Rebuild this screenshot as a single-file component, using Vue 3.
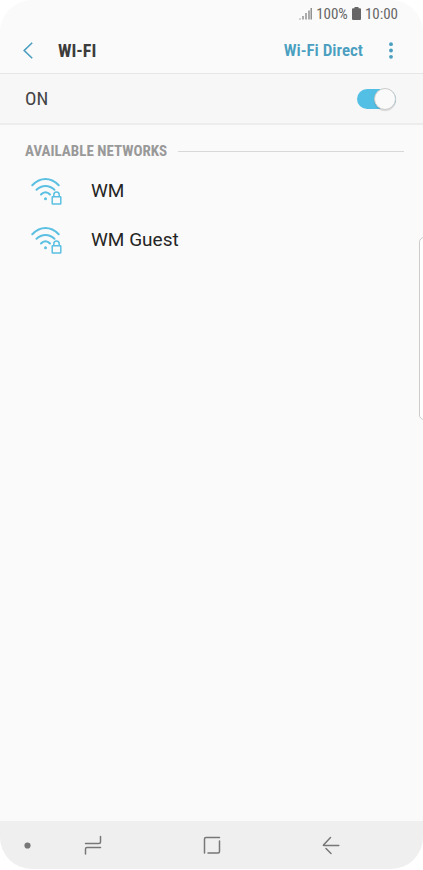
<script setup>
import { ref } from 'vue'

const enabled = ref(true)
const networks = ['WM', 'WM Guest']
</script>

<template>
  <div class="phone">
    <div class="status">
      <svg class="signal" viewBox="0 0 13 12" aria-hidden="true">
        <path d="M1 10.500v1M4 8v3.500M7 5v6.500M10 2.500v9M12.200 0v11.500" />
      </svg>
      <span>100%</span>
      <svg class="battery" viewBox="0 0 9 13" aria-hidden="true">
        <path d="M2.500 0h4v1.300H8q1 0 1 1V12q0 1-1 1H1q-1 0-1-1V2.300q0-1 1-1h1.500z" />
      </svg>
      <span>10:00</span>
    </div>

    <header class="bar">
      <button class="icon-button back" type="button" aria-label="Back">
        <svg viewBox="0 0 10 17" aria-hidden="true"><path d="M9.200 .7 1.200 8.500l8 7.800" /></svg>
      </button>
      <h1>WI-FI</h1>
      <a class="direct" href="#">Wi-Fi Direct</a>
      <button class="icon-button more" type="button" aria-label="More options">
        <svg viewBox="0 0 4 17" aria-hidden="true">
          <circle cx="2" cy="2.200" r="1.900" /><circle cx="2" cy="8.500" r="1.900" /><circle cx="2" cy="14.800" r="1.900" />
        </svg>
      </button>
    </header>

    <label class="power">
      <span>{{ enabled ? 'ON' : 'OFF' }}</span>
      <input v-model="enabled" type="checkbox" role="switch" />
    </label>

    <main>
      <h2>AVAILABLE NETWORKS</h2>
      <ul>
        <li v-for="name in networks" :key="name">
          <button class="network" type="button">
            <svg class="wifi" viewBox="0 0 32 28" aria-hidden="true">
              <g class="waves">
                <path d="M1.300 8.200Q7.500 2 14.500 2t13.200 6.200" />
                <path d="M5.500 12.800q4-3.800 9-3.800t9 3.800" />
                <path d="M10 17.500q2-2.200 4.500-2.200t4.500 2.200" />
              </g>
              <circle cx="14.500" cy="21.700" r="1.500" />
              <g class="lock">
                <rect x="21.200" y="19.700" width="8.600" height="7.300" rx=".6" />
                <path d="M22.800 19.500v-1.700q0-2.800 2.700-2.800t2.700 2.800v1.700" />
              </g>
            </svg>
            <span>{{ name }}</span>
          </button>
        </li>
      </ul>
    </main>

    <div class="edge"></div>

    <nav>
      <button class="hide" type="button" aria-label="Hide navigation bar">
        <svg class="dot" viewBox="0 0 7 7" aria-hidden="true"><circle cx="3.500" cy="3.500" r="3.100" /></svg>
      </button>
      <button type="button" aria-label="Recent apps">
        <svg viewBox="0 0 18 20" aria-hidden="true">
          <path d="M1.500 8.500H15q1.500 0 1.500-1.500V1.500M16.500 12.500H3q-1.500 0-1.500 1.500v5" />
        </svg>
      </button>
      <button type="button" aria-label="Home">
        <svg viewBox="0 0 18 20" aria-hidden="true">
          <path d="M1.500 18V4q0-1.500 1.500-1.500h13.500M16.500 6v10.500q0 1.500-1.500 1.500H5" />
        </svg>
      </button>
      <button type="button" aria-label="Back">
        <svg viewBox="0 0 18 20" aria-hidden="true">
          <path d="M8.500 2.500 1.500 10q-.4.500.3.500h15M4 13.500l5 5" />
        </svg>
      </button>
    </nav>
  </div>
</template>

<style>
body {
  background: #fff;
}
</style>

<style scoped>
.phone {
  position: relative;
  display: flex;
  flex-direction: column;
  box-sizing: border-box;
  min-height: calc(100vh - 1px);
  overflow: hidden;
  border-radius: 32px;
  background: #fafafa;
  color: #252525;
  font-family: "Roboto Condensed", Roboto, sans-serif;
}

button {
  padding: 0;
  border: 0;
  background: none;
  color: inherit;
  font: inherit;
}

svg {
  display: block;
  fill: none;
}

.status {
  display: flex;
  align-items: center;
  justify-content: flex-end;
  gap: 4px;
  height: 27px;
  padding-right: 25px;
  color: #666;
  font-size: 15px;
}

.signal {
  width: 13px;
  height: 12px;
  stroke: #777;
  stroke-width: 1.2;
}

.battery {
  width: 9px;
  height: 13px;
  fill: #666;
}

.bar {
  display: flex;
  align-items: center;
  height: 46px;
  padding: 0 22px;
  border-bottom: 1px solid #e6e6e6;
}

.icon-button {
  display: flex;
  align-items: center;
  justify-content: center;
  height: 40px;
}

.back {
  width: 12px;
}

.back svg {
  width: 10px;
  height: 17px;
  stroke: #4a9fc0;
  stroke-width: 1.6;
}

h1 {
  flex: 1;
  margin: 0 0 0 24px;
  color: #3c3c3c;
  font-size: 18px;
  font-weight: 700;
}

.direct {
  color: #4a9fc0;
  font-size: 17px;
  font-weight: 600;
  text-decoration: none;
}

.more {
  width: 20px;
  margin-left: 18px;
}

.more svg {
  width: 4px;
  height: 17px;
  fill: #4a9fc0;
}

.power {
  display: flex;
  align-items: center;
  justify-content: space-between;
  height: 49px;
  padding: 0 27px 0 25px;
  border-bottom: 2px solid #ececec;
  background: #f7f7f7;
  color: #444;
  font-size: 19px;
}

.power input {
  display: flex;
  align-items: center;
  width: 39px;
  height: 20px;
  margin: 0;
  border-radius: 10px;
  appearance: none;
  background: #bbb;
}

.power input::before {
  box-sizing: border-box;
  width: 22px;
  height: 22px;
  flex: none;
  border: 1px solid #ccc;
  border-radius: 50%;
  background: #fafafa;
  box-shadow: 0 1px 1px #0002;
  content: "";
}

.power input:checked {
  justify-content: flex-end;
  background: #54bfe4;
}

main {
  flex: 1;
  padding-top: 16px;
}

h2 {
  display: flex;
  align-items: center;
  gap: 11px;
  height: 20px;
  margin: 0 19px 5px 25px;
  color: #999;
  font-size: 15px;
  font-weight: 700;
}

h2::after {
  flex: 1;
  height: 1px;
  background: #d8d8d8;
  content: "";
}

ul {
  margin: 0;
  padding: 0;
  list-style: none;
}

.network {
  display: flex;
  align-items: center;
  gap: 28px;
  width: 100%;
  height: 49px;
  padding: 0 31px;
  font-family: Roboto, sans-serif;
  font-size: 19px;
  text-align: left;
}

.wifi {
  width: 32px;
  height: 28px;
  fill: #5bc0e2;
}

.waves,
.lock {
  fill: none;
  stroke: #5bc0e2;
  stroke-width: 2;
  stroke-linecap: round;
}

.lock {
  stroke-width: 1.5;
}

.edge {
  position: absolute;
  top: 237px;
  right: -8px;
  box-sizing: border-box;
  width: 12px;
  height: 183px;
  border: 1px solid #ccc;
  border-radius: 5px;
  background: #fff;
}

nav {
  display: grid;
  grid-template-columns: 31px repeat(3, 1fr);
  align-items: center;
  height: 48px;
  padding-right: 34px;
  column-gap: 4px;
  background: #efefef;
}

nav button {
  display: flex;
  justify-content: center;
}

nav .hide {
  justify-content: flex-end;
}

nav svg {
  width: 18px;
  height: 20px;
  stroke: #777;
  stroke-width: 1.5;
  stroke-linecap: round;
}

nav .dot {
  width: 7px;
  height: 7px;
  fill: #777;
  stroke: none;
}
</style>
